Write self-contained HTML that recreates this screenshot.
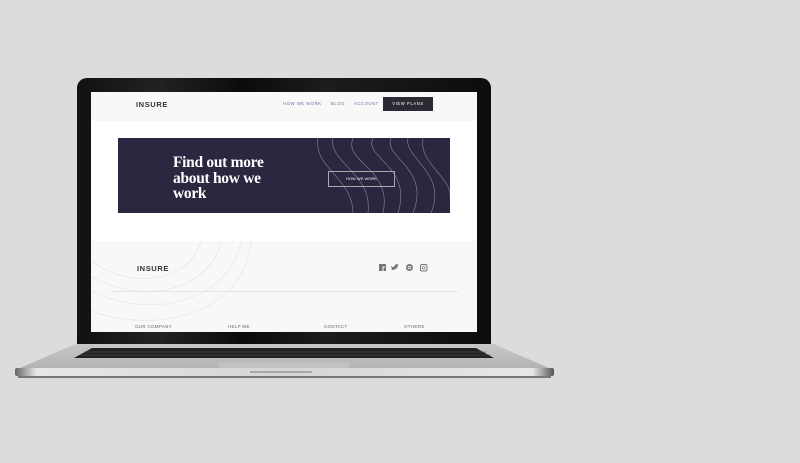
<!DOCTYPE html>
<html><head><meta charset="utf-8"><style>
*{margin:0;padding:0;box-sizing:border-box}
body{width:800px;height:463px;background:#dcdcdc;position:relative;overflow:hidden;font-family:"Liberation Sans",sans-serif}
.abs{position:absolute}
.bezel{left:77px;top:78px;width:414px;height:266px;border-radius:10px 10px 0 0;background:linear-gradient(90deg,#111 0%,#222 20%,#0b0b0b 40%,#1c1c1c 60%,#0d0d0d 100%)}
.screen{left:91px;top:92px;width:386px;height:240px;background:#fff;overflow:hidden}
.nav{left:0;top:0;width:386px;height:29px;background:#f8f8f8}
.logo{font-weight:bold;letter-spacing:0.6px;color:#333;font-size:7.5px}
.nl{font-size:4.3px;color:#6a6fa8;letter-spacing:0.5px;top:9px}
.btn{left:292px;top:5px;width:50px;height:14px;background:#2d2a33;color:#fff;font-size:4.2px;letter-spacing:0.6px;text-align:center;line-height:14px}
.banner{left:27px;top:46px;width:332px;height:75px;background:#2d2640;overflow:hidden}
.h{left:55px;top:17px;color:#fff;font-family:"Liberation Serif",serif;font-weight:bold;font-size:15.5px;line-height:15.5px;letter-spacing:-0.3px}
.b2{left:210px;top:33px;width:67px;height:16px;border:1px solid #aaa;color:#fff;font-size:4px;text-align:center;line-height:14px}
.foot{left:0;top:149px;width:386px;height:100px;background:#f8f8f8;overflow:hidden}
.fl{font-size:4.5px;color:#666;top:83px;letter-spacing:0.3px}
.base{left:14px;top:340px;width:541px;height:40px}
</style></head><body>
<div class="abs base">
<svg width="541" height="40">
<defs><linearGradient id="g" x1="0" y1="0" x2="0" y2="1"><stop offset="0" stop-color="#c8c8c8"/><stop offset="1" stop-color="#b4b4b4"/></linearGradient>
<linearGradient id="e" x1="0" x2="1"><stop offset="0" stop-color="#666"/><stop offset=".04" stop-color="#e8e8e8"/><stop offset=".5" stop-color="#d5d5d5"/><stop offset=".96" stop-color="#e8e8e8"/><stop offset="1" stop-color="#555"/></linearGradient></defs>
<polygon points="66,2 475,2 535,28 6,28" fill="url(#g)"/>
<polygon points="78,8 462,8 480,18 60,18" fill="#222"/>
<g stroke="#555" stroke-width="0.5"><line x1="70" y1="12" x2="472" y2="12"/><line x1="66" y1="15" x2="476" y2="15"/></g>
<rect x="205" y="22" width="130" height="6" fill="#c2c2c2"/>
<rect x="1" y="28" width="539" height="8" rx="2" fill="url(#e)"/>
<rect x="236" y="31" width="62" height="2" fill="#aaa"/>
<rect x="4" y="36" width="533" height="2" fill="#777"/>
</svg></div>
<div class="abs bezel"></div>
<div class="abs screen">
 <div class="abs nav">
  <div class="abs logo" style="left:45px;top:8px">INSURE</div>
  <div class="abs nl" style="left:192px">HOW WE WORK</div>
  <div class="abs nl" style="left:240px">BLOG</div>
  <div class="abs nl" style="left:263px">ACCOUNT</div>
  <div class="abs btn">VIEW PLANS</div>
 </div>
 <div class="abs banner">
  <svg class="abs" style="left:195px;top:0" width="137" height="75" fill="none" stroke="#8a85a5" stroke-width="0.6">
   <path d="M5,0 C0,30 40,40 40,75"/><path d="M20,0 C15,25 60,35 55,75"/><path d="M40,0 C30,25 80,30 70,75"/><path d="M60,0 C50,20 100,28 85,75"/><path d="M78,0 C70,20 118,30 100,75"/><path d="M95,0 C90,20 135,35 118,75"/><path d="M110,0 C105,25 140,40 137,60"/>
  </svg>
  <div class="abs h">Find out more<br>about how we<br>work</div>
  <div class="abs b2">HOW WE WORK</div>
 </div>
 <div class="abs foot">
  <svg class="abs" style="left:0;top:0" width="170" height="100" fill="none" stroke="#e2e2e2" stroke-width="0.6">
   <path d="M0,20 C40,50 100,40 110,0"/><path d="M0,35 C50,65 120,50 130,0"/><path d="M0,50 C60,80 140,60 150,0"/><path d="M0,70 C70,95 155,70 160,0"/>
  </svg>
  <div class="abs logo" style="left:46px;top:23px">INSURE</div>
  <svg class="abs" style="left:288px;top:23px" width="50" height="8">
   <rect x="0" y="0" width="7" height="7" fill="#777"/><path d="M4,7 V3 H6" stroke="#f8f8f8" fill="none"/>
   <path d="M13,6 C16,6 19,4 19,1 L20,0.5 L19,0.5 C18,0 17,0 16,1 C15,2 15,3 15,3 C13,3 12,2 12,2 C12,4 13,4 13,4 C12,5 13,6 13,6Z" fill="#777"/>
   <circle cx="30.5" cy="3.5" r="3.5" fill="#777"/><circle cx="30.5" cy="3.5" r="1.4" fill="none" stroke="#f8f8f8" stroke-width="0.7"/>
   <rect x="41.5" y="0.5" width="6.5" height="6.5" rx="1.5" fill="none" stroke="#777"/><circle cx="44.75" cy="3.75" r="1.4" fill="none" stroke="#777" stroke-width="0.7"/>
  </svg>
  <div class="abs" style="left:20px;top:50px;width:347px;height:1px;background:#e6e6e6"></div>
  <div class="abs fl" style="left:44px">OUR COMPANY</div>
  <div class="abs fl" style="left:137px">HELP ME</div>
  <div class="abs fl" style="left:233px">CONTACT</div>
  <div class="abs fl" style="left:313px">OTHERS</div>
 </div>
</div>
</body></html>
